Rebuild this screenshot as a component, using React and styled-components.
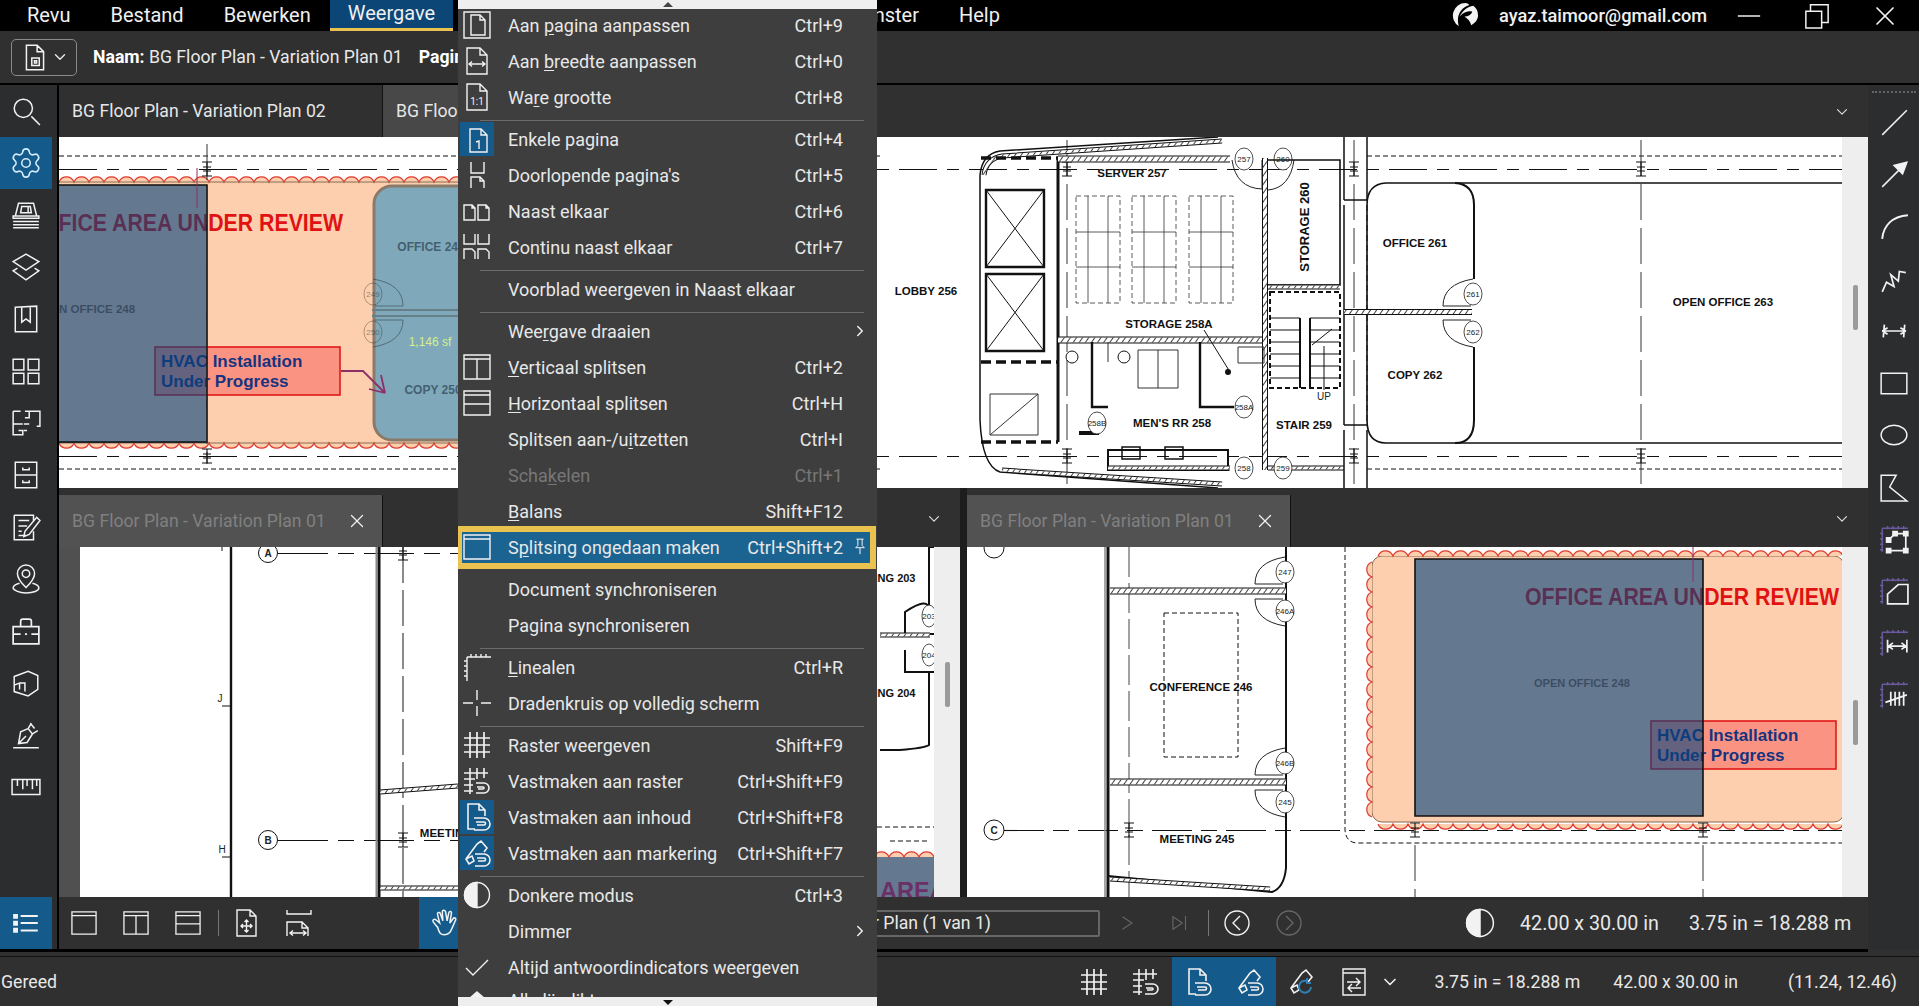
import React from 'react';
import styled, { createGlobalStyle } from 'styled-components';
import { Settings, ChevronDown, ChevronRight, X } from 'lucide-react';

const GlobalStyle = createGlobalStyle`
    html, body {
        margin: 0;
        padding: 0;
        background: #000;
        overflow: hidden;
    }
    * {
        box-sizing: border-box;
    }
`;

const purple = '#6b5a9e';

// every glyph sits in a 28 x 28 box
const glyphs = {
    search: <path d="M19 19l8 8M20 11.500a8.500 8.500 0 1 1-17 0 8.500 8.500 0 0 1 17 0z" />,
    tray: <path d="M7 3h14l3 12H4zM10 6h8l1 6H9zM16 6v6M2 15h24v2H2zM2 20h24M2 23h24M2 26h24" />,
    layers: <path d="M14 2l12 7-12 8-12-8zM6 15l-4 2.500 12 8.500 12-8.500-4-2.500" />,
    bookmark: <path d="M4 3l20-1v24H4zM10 3v14l4-3 4 3V3" />,
    thumbs: <path d="M2 3h10v10H2zM16 3h10v10H16zM2 16h10v10H2zM16 16h10v10H16z" />,
    plan: <path d="M13 3h14v14h-3M2 3h7M2 3v22h9v-4h-4M2 15h9M17 3v6h-4M17 15h-5M12 21h3" />,
    cabinet: <path d="M4 2h20v24H4zM4 14h20M11 7v2h6V7M11 19v2h6v-2" />,
    notes: <path d="M3 3h18v6M3 3v23h18v-8M7 8h10M7 13h8M7 18h3M7 22h7M27 8l-3-3-11 13-1 5 5-2z" />,
    pin: <path d="M14 22s-8-8-8-13a8 8 0 0 1 16 0c0 5-8 13-8 13zM17.500 9a3.500 3.500 0 1 1-7 0 3.500 3.500 0 0 1 7 0zM8 18c-4 1-6 3-6 4.500S7 27 14 27s12-2 12-4.500-2-3.500-6-4.500" />,
    toolbox: <path d="M2 10h24v16H2zM9 10V5a2 2 0 0 1 2-2h6a2 2 0 0 1 2 2v5M2 17h7M13 17h2M19 17h7" strokeWidth="1.600" />,
    solid: <path d="M3 8l13-5 9 4v13l-9 6-13-4zM3 16l5-2v6M8 14h5v8" />,
    sign: <path d="M2 26h24M7 22l2-11 7-3 4 5-5 8zM7 22l7-7M16 8l3-5M20 13l5-3M18 3l4 5" />,
    ruler: <path d="M1 7h26v14H1zM6 7v6M11 7v9M15 7v6M20 7v9M24 7v6" />,

    line: <path d="M3 26L26 3" />,
    arrow: <path d="M3 26L20 9M26 3l-12 3 8 8z" fill="currentColor" />,
    arc: <path d="M3 26C4 14 12 5 27 4" strokeWidth="1.800" />,
    zigzag: <path d="M3 26l4-9 7 4-3-11 7 6 1-9 6 1" strokeWidth="1.600" />,
    dimension: <path d="M3 14h22M5 8l-1 12M24 8l-1 12M3 14l5-3M3 14l5 3M25 14l-5-3M25 14l-5 3" strokeWidth="1.600" />,
    rect: <path d="M2 5h24v19H2z" />,
    ellipse: <path d="M26 14c0 5-5.500 9-12 9S2 19 2 14s5.500-9 12-9 12 4 12 9z" />,
    callout: <path d="M2 3h14l-6 11 16 13H2z" />,
    polyArea: (
        <>
            <path stroke={purple} d="M3 3h24M3 3v22M8 1v3M13 1v3M18 1v3M23 1v3M1 8h3M1 13h3M1 18h3M1 23h3" />
            <path d="M9 14l6-6h10v16H9" strokeWidth="1.600" />
            <path d="M7 12h4v4H7zM13 6h4v4h-4zM23 6h4v4h-4zM23 22h4v4h-4zM7 22h4v4H7z" fill="currentColor" />
        </>
    ),
    cutArea: (
        <>
            <path stroke={purple} d="M3 3h24M3 3v22M8 1v3M13 1v3M18 1v3M23 1v3M1 8h3M1 13h3M1 18h3M1 23h3" />
            <path d="M8 25V16l10-9h9v18z" strokeWidth="1.600" />
        </>
    ),
    lengthArea: (
        <>
            <path stroke={purple} d="M3 3h24M3 3v22M8 1v3M13 1v3M18 1v3M23 1v3M1 8h3M1 13h3M1 18h3M1 23h3" />
            <path d="M8 10v12M26 10v12M9 16h16M13 13l-4 3 4 3M21 13l4 3-4 3" strokeWidth="1.600" />
        </>
    ),
    countArea: (
        <>
            <path stroke={purple} d="M3 3h24M3 3v22M8 1v3M13 1v3M18 1v3M23 1v3M1 8h3M1 13h3M1 18h3M1 23h3" />
            <path d="M11 10v13M15 10v13M19 10v13M23 10v13M6 20l20-7" strokeWidth="1.600" />
        </>
    ),

    fitPage: <path d="M1 1h26v26H1zM8 4h9l5 5v15H8zM17 4v5h5" />,
    fitWidth: <path d="M4 1h13l7 7v19H4zM17 1v7h7M6 17h16M9 14.500L6 17l3 2.500M19 14.500l3 2.500-3 2.500" />,
    actual: (
        <>
            <path d="M4 1h13l7 7v19H4zM17 1v7h7" />
            <text x="14" y="22" textAnchor="middle" fontSize="10" fill="currentColor" stroke="none" fontFamily="Roboto, sans-serif">1:1</text>
        </>
    ),
    single: <path d="M7 4h11l6 6v17H7zM18 4v6h6M13 17l3-1v8" />,
    continuous: <path d="M8 1v11h13V1M8 27v-11h9l4 4v7M17 16v4h4" />,
    sideBySide: <path d="M1 8h8l3 3v12H1zM9 8v3h3M15 8h8l3 3v12H15zM23 8v3h3" />,
    contSide: <path d="M1 1v10h11V1M15 1v10h11V1M1 26v-10h8l3 3v7M15 26v-10h8l3 3v7" />,
    splitV: <path d="M1 2h26v24H1zM1 6h26M14 6v20" />,
    splitH: <path d="M1 2h26v24H1zM1 6h26M1 15h26" />,
    unsplit: <path d="M1 2h26v24H1zM1 6h26" />,
    moveFit: <path d="M4 1h13l6 6v20H4zM17 1v6h6M13.500 11v12M8 17h11M11.500 13l2-2 2 2M11.500 21l2 2 2-2M10 15l-2 2 2 2M17 15l2 2-2 2" />,
    widthFit: <path d="M2 1v4h24V1M2 27V13h15l6 6M17 13v6h6v8M5 24h16M8 21.500L5 24l3 2.500M18 21.500l3 2.500-3 2.500" />,
    rulers: <path d="M4 4h24M4 4v24M8 1v3M13 1v3M18 1v3M23 1v3M1 8h3M1 13h3M1 18h3M1 23h3" />,
    cross: <path d="M14 1v10M14 17v10M0 14h10M18 14h10" />,
    grid: <path d="M7 1v26M14 1v26M21 1v26M1 7h26M1 14h26M1 21h26" strokeWidth="1.700" />,
    snapGrid: <path d="M7 1v26M14 1v11M21 1v10M1 6h24M1 12h11M1 18h9M1 24h9M13 16h8a4.500 4.500 0 0 1 0 10h-8M14 20h6a1 1 0 0 1 0 2h-5" strokeWidth="1.600" />,
    snapPage: <path d="M12 26H5V1h11l6 6v6M16 1v6h6M11 15h10a5.500 5.500 0 0 1 0 12H11M13 19h8a1.500 1.500 0 0 1 0 3h-7" strokeWidth="1.600" />,
    snapMark: <path d="M3 20L14 5l4-3 6 7-3 4M3 20l3 5 5-3-2-5zM12 15h9a5.500 5.500 0 0 1 0 12h-9M14 19h7a1.500 1.500 0 0 1 0 3h-6" strokeWidth="1.600" />,
    syncMark: (
        <>
            <path d="M3 20L14 5l4-3 6 7-4 5M3 20l3 5 5-3-2-5z" strokeWidth="1.600" />
            <path d="M23 19a6 6 0 1 1-4-6M19 10v5h4" stroke="#2f7fb5" strokeWidth="2" />
        </>
    ),
    swap: <path d="M3 1h22v26H3zM3 5h22M7 14h13M16 10l4 4-4 4M21 20H8M12 16l-4 4 4 4" />,
    half: (
        <>
            <circle cx="14" cy="14" r="12.500" />
            <path d="M14 1.500a12.500 12.500 0 0 0 0 25z" fill="currentColor" />
        </>
    ),
    check: <path d="M3 15l7 7L25 7" />,
    tail: <path d="M14 6l7 6H7z" fill="currentColor" />,
    pinOff: <path d="M9 3h10M11 3v9l-3 3h12l-3-3V3M14 15v9" />,
    list: <path d="M3 6.500h2.500v2.500H3zM3 13h2.500v2.500H3zM3 19.500h2.500V22H3zM9 7.500h16M9 14h16M9 21h16" strokeWidth="2" fill="currentColor" />,
    hand: <path d="M7 18l-4-5c-1-2 1-3 2.500-2L9 14 7 6c-.500-2 2-2.500 2.500-1L12 12 11.500 3.500c0-2 2.500-2 3 0L16 12l1.500-7.500c.500-2 3-1.500 2.500.500l-1.500 9 3-4c1-1.500 3-.500 2.500 1l-3.500 8c-1 3-3 6-7 6s-5-2-6.500-7.500z" />,
    play: <path d="M7 6l12 8-12 8" />,
    last: <path d="M5 6l12 8-12 8zM21 5v18" />,
    circleLeft: <path d="M26 14a12 12 0 1 1-24 0 12 12 0 0 1 24 0zM17 7l-7 7 7 7" />,
    circleRight: <path d="M26 14a12 12 0 1 1-24 0 12 12 0 0 1 24 0zM11 7l7 7-7 7" />,
    docPage: <path d="M6 3h10l6 6v17H6zM16 3v6h6M11 15h7v7h-7zM13.500 17.500h2v2h-2z" />,
    restore: <path d="M2 9h17v18H2zM7 9V2h19v19h-7" strokeWidth="1.600" />,
    minimize: <path d="M2 14h24" strokeWidth="1.600" />,
};

const Svg = styled.svg`
    display: block;
    flex: none;
    width: ${(p) => p.$size || 28}px;
    height: ${(p) => p.$size || 28}px;
    color: ${(p) => p.$color || '#f2f2f2'};
    fill: none;
    stroke: currentColor;
    stroke-width: 1.4;
`;

const Glyph = ({ name, size, color }) => (
    <Svg viewBox="0 0 28 28" $size={size} $color={color}>
        {glyphs[name]}
    </Svg>
);

const railTop = ['search', 'gear', 'tray', 'layers', 'bookmark', 'thumbs', 'plan', 'cabinet', 'notes', 'pin', 'toolbox', 'solid', 'sign', 'ruler'];
const railRight = ['line', 'arrow', 'arc', 'zigzag', 'dimension', 'rect', 'ellipse', 'callout', 'polyArea', 'cutArea', 'lengthArea', 'countArea'];

const menuRows = [
    { icon: 'fitPage', label: 'Aan &pagina aanpassen', key: 'Ctrl+9' },
    { icon: 'fitWidth', label: 'Aan &breedte aanpassen', key: 'Ctrl+0' },
    { icon: 'actual', label: 'Wa&re grootte', key: 'Ctrl+8' },
    { sep: true },
    { icon: 'single', label: 'Enkele pagina', key: 'Ctrl+4', on: true },
    { icon: 'continuous', label: "Doorlopende pagina's", key: 'Ctrl+5' },
    { icon: 'sideBySide', label: 'Naast elkaar', key: 'Ctrl+6' },
    { icon: 'contSide', label: 'Continu naast elkaar', key: 'Ctrl+7' },
    { sep: true },
    { label: 'Voorblad weergeven in Naast elkaar' },
    { sep: true },
    { label: 'Wee&rgave draaien', more: true },
    { icon: 'splitV', label: '&Verticaal splitsen', key: 'Ctrl+2' },
    { icon: 'splitH', label: '&Horizontaal splitsen', key: 'Ctrl+H' },
    { label: 'Splitsen aan-/u&itzetten', key: 'Ctrl+I' },
    { label: 'Scha&kelen', key: 'Ctrl+1', off: true },
    { label: '&Balans', key: 'Shift+F12' },
    { icon: 'unsplit', label: 'S&plitsing ongedaan maken', key: 'Ctrl+Shift+2', hover: true },
    { sep: true, blank: true },
    { label: 'Document synchroniseren' },
    { label: 'Pagina synchroniseren' },
    { sep: true },
    { icon: 'rulers', label: '&Linealen', key: 'Ctrl+R' },
    { icon: 'cross', label: 'Dradenkruis op volledig scherm' },
    { sep: true },
    { icon: 'grid', label: 'Raster weergeven', key: 'Shift+F9' },
    { icon: 'snapGrid', label: 'Vastmaken aan raster', key: 'Ctrl+Shift+F9' },
    { icon: 'snapPage', label: 'Vastmaken aan inhoud', key: 'Ctrl+Shift+F8', on: true },
    { icon: 'snapMark', label: 'Vastmaken aan markering', key: 'Ctrl+Shift+F7', on: true },
    { sep: true },
    { icon: 'half', label: 'Donkere modus', key: 'Ctrl+3' },
    { label: 'Dimmer', more: true },
    { icon: 'check', label: 'Altijd antwoordindicators weergeven' },
    { icon: 'tail', label: 'Alle lijndikten weergeven', tail: true },
];

// "&" marks the access key of a menu label
const Access = ({ text }) => {
    const at = text.indexOf('&');
    if (at < 0) return text;
    return (
        <>
            {text.slice(0, at)}
            <u>{text[at + 1]}</u>
            {text.slice(at + 2)}
        </>
    );
};

const scallops = (x1, x2, y, up) => {
    let d = `M${x1} ${y}`;
    for (let x = x1; x < x2; x += 15) d += `a8 8 0 0 ${up ? 1 : 0} 15 0`;
    return d;
};

const scallopsDown = (y1, y2, x) => {
    let d = `M${x} ${y1}`;
    for (let y = y1; y < y2; y += 15) d += 'a8 8 0 0 0 0 15';
    return d;
};

const GridMark = ({ x, y }) => (
    <path d={`M${x - 5} ${y - 7}h10M${x - 5} ${y + 7}h10M${x} ${y - 7}v14M${x - 4} ${y - 2}h8M${x - 4} ${y + 2}h8`} stroke="#111" strokeWidth="1.100" />
);

const Door = ({ x, y, label, side = 1, flip = 1, dim }) => (
    <g opacity={dim ? 0.45 : 1}>
        <path
            d={`M${x} ${y - 15 * flip}Q${x - 30 * side} ${y - 10 * flip} ${x - 30 * side} ${y + 12 * flip}H${x - 2 * side}`}
            fill="none"
            stroke="#222"
            strokeWidth="1"
        />
        <ellipse cx={x} cy={y} rx="9" ry="11" fill={dim ? 'none' : '#fff'} stroke="#222" strokeWidth=".8" />
        <Tag x={x} y={y}>{label}</Tag>
    </g>
);

const Wall = ({ d, w = 7 }) => (
    <>
        <path d={d} fill="none" stroke="#111" strokeWidth={w} />
        <path d={d} fill="none" stroke="#fff" strokeWidth={w - 2} />
        <path d={d} fill="none" stroke="url(#hatch)" strokeWidth={w - 2} />
    </>
);

const Rack = ({ x }) => (
    <g fill="none" stroke="#333" strokeWidth=".8">
        <path d={`M${x} 196h44v107h-44z`} strokeDasharray="5 3" />
        <path d={`M${x + 12} 196v107M${x + 32} 196v107M${x} 232h44M${x} 267h44`} />
    </g>
);

const Review = ({ x, y }) => (
    <PlanTitle x={x} y={y} textAnchor="end" textLength="314" lengthAdjust="spacingAndGlyphs">OFFICE AREA UNDER REVIEW</PlanTitle>
);

const Hvac = ({ x, y }) => (
    <g>
        <rect x={x} y={y} width="185" height="48" fill="#fb9383" stroke="#e01818" strokeWidth="1.600" />
        <Callout x={x + 6} y={y + 14}>HVAC Installation</Callout>
        <Callout x={x + 6} y={y + 34}>Under Progress</Callout>
    </g>
);

const PlanTop = () => (
    <PlanSvg viewBox="59 137 1783 351" $w={1783} $h={351}>
        <defs>
            <pattern id="hatch" width="5" height="5" patternUnits="userSpaceOnUse" patternTransform="rotate(35)">
                <path d="M0 0V5" stroke="#111" strokeWidth="1.600" />
            </pattern>
        </defs>

        <rect x="50" y="182" width="600" height="261" fill="#fdcfae" />
        <path d={scallops(44, 650, 182, true)} fill="#fdcfae" stroke="#e0392e" strokeWidth="1.200" />
        <path d={scallops(44, 650, 443, false)} fill="#fdcfae" stroke="#e0392e" strokeWidth="1.200" />
        <path d="M59 182h600M59 443h600" stroke="#8a6a50" strokeWidth="1" />
        <rect x="374" y="186" width="200" height="254" rx="18" fill="#7fa9bb" stroke="#8a7a6a" strokeWidth="3" />
        <Label x={431} y={247} $c="#44606f" $s={12}>OFFICE 248</Label>
        <Label x={433} y={390} $c="#44606f" $s={12}>COPY 250</Label>
        <Label x={430} y={342} $c="#d8ef8a" $s={12} $w={400}>1,146 sf</Label>
        <Door x={373} y={294} label="249" side={-1} dim />
        <Door x={373} y={332} label="250" side={-1} flip={-1} dim />
        <path d="M372 310h90M372 316h90" stroke="#66808a" strokeWidth="2" />
        <Review x={343} y={231} />
        <Hvac x={155} y={347} />
        <path d="M341 371h22l22 22M385 393l-16-4M385 393l-4-18" fill="none" stroke="#8e2f68" strokeWidth="1.800" />
        <rect x="40" y="185" width="167" height="258" fill="#06437c" fillOpacity=".62" />
        <path d="M40 185h167v257H40" fill="none" stroke="#111" strokeWidth="1.600" />
        <Label x={85} y={309} $c="#3c4d63" $s={11.5}>OPEN OFFICE 248</Label>

        <path d="M59 156H880M1367 156H1842M1367 469H1842M59 469H880" stroke="#111" strokeWidth="1" strokeDasharray="5 3" />
        <path d="M59 169.500H1842M59 456.500H1842" stroke="#111" strokeWidth="1.100" strokeDasharray="38 10 12 10" />
        <path d="M207 144v320M1067 140v348M1354 140v348M1641 140v348" stroke="#333" strokeWidth="1" strokeDasharray="36 8" />
        <path d="M197 168v40" stroke="#8e2f68" strokeWidth="1" />
        <GridMark x={207} y={169} />
        <GridMark x={207} y={456} />
        <GridMark x={1067} y={169} />
        <GridMark x={1354} y={169} />
        <GridMark x={1641} y={169} />
        <GridMark x={1067} y={456} />
        <GridMark x={1354} y={456} />
        <GridMark x={1641} y={456} />

        {/* core and shafts */}
        <path d="M1218 137L1000 151Q982 154 980 175V420Q982 466 1000 472L1218 488" fill="none" stroke="#111" strokeWidth="1.500" />
        <Wall d="M1222 141L1002 156Q986 159 984 175" w={5} />
        <Wall d="M1002 470L1222 484" w={5} />
        <path d="M981 158H1058M981 442H1058M981 362H1058" fill="none" stroke="#111" strokeWidth="3.500" strokeDasharray="10 5" />
        <path d="M1058 158V442" stroke="#111" strokeWidth="3" />
        <path d="M986 190h58v77h-58zM986 190l58 77M1044 190l-58 77M986 274h58v77h-58zM986 274l58 77M1044 274l-58 77" fill="none" stroke="#111" strokeWidth="1" />
        <path d="M986 190h58v77h-58zM986 274h58v77h-58z" fill="none" stroke="#111" strokeWidth="2.400" />
        <path d="M990 394h48v41h-48zM990 435l48-41" fill="none" stroke="#333" strokeWidth="1" />

        {/* server room */}
        <Wall d="M1058 159H1230" />
        <Wall d="M1058 340H1264" />
        <Wall d="M1265 158V470" w={6} />
        <Rack x={1076} />
        <Rack x={1132} />
        <Rack x={1189} />
        <path d="M1232 160Q1236 188 1262 189V160M1268 190Q1290 188 1294 160" fill="none" stroke="#222" />
        <ellipse cx="1244" cy="159" rx="9" ry="11" fill="#fff" stroke="#222" strokeWidth=".8" />
        <Tag x={1244} y={159}>257</Tag>
        <ellipse cx="1283" cy="159" rx="9" ry="11" fill="#fff" stroke="#222" strokeWidth=".8" />
        <Tag x={1283} y={159}>260</Tag>

        {/* storage, stairs, toilets */}
        <path d="M1268 160H1340V285H1268" fill="none" stroke="#111" strokeWidth="1.600" />
        <Wall d="M1268 287H1340" w={5} />
        <path d="M1270 292h70v96h-70z" fill="none" stroke="#111" strokeWidth="2" strokeDasharray="5 3" />
        <path d="M1270 318h30M1270 330h30M1270 342h30M1270 354h30M1270 366h30M1270 378h30M1310 318h30M1310 330h30M1310 342h30M1310 354h30M1310 366h30M1310 378h30" stroke="#111" strokeWidth="1.200" />
        <path d="M1300 318v70M1310 318v70" stroke="#111" strokeWidth="2" />
        <path d="M1312 345l20-16M1324 390v-44" stroke="#111" fill="none" />
        <Tag x={1324} y={396} $s={10}>UP</Tag>
        <path d="M1092 342v65H1108M1200 342v65h14M1214 407h20" fill="none" stroke="#111" strokeWidth="2.400" />
        <path d="M1108 342v20M1138 350h40v38h-40zM1158 350v38M1238 347h26v16h-26z" fill="none" stroke="#333" strokeWidth="1" />
        <path d="M1080 432h18v2H1080zM1108 450h120V470H1108z" fill="none" stroke="#111" strokeWidth="2" />
        <path d="M1122 447h18v12h-18zM1165 447h18v12h-18z" fill="none" stroke="#111" strokeWidth="1.500" />
        <circle cx="1072" cy="357" r="6" fill="none" stroke="#111" />
        <circle cx="1124" cy="357" r="6" fill="none" stroke="#111" />
        <path d="M1204 330l26 42" stroke="#111" />
        <circle cx="1228" cy="372" r="3" fill="#111" />
        <Wall d="M1108 468H1230" w={5} />
        <Wall d="M1268 468H1344" w={5} />
        <ellipse cx="1244" cy="407" rx="9" ry="11" fill="#fff" stroke="#222" strokeWidth=".8" />
        <Tag x={1244} y={407}>258A</Tag>
        <ellipse cx="1097" cy="423" rx="9" ry="11" fill="#fff" stroke="#222" strokeWidth=".8" />
        <Tag x={1097} y={423}>258B</Tag>
        <ellipse cx="1244" cy="468" rx="9" ry="11" fill="#fff" stroke="#222" strokeWidth=".8" />
        <Tag x={1244} y={468}>258</Tag>
        <ellipse cx="1283" cy="468" rx="9" ry="11" fill="#fff" stroke="#222" strokeWidth=".8" />
        <Tag x={1283} y={468}>259</Tag>

        {/* corridor and offices */}
        <path d="M1344 200V137M1367 200V137M1344 430V488M1367 430V488M1344 200H1367M1344 205V425M1344 425H1367" fill="none" stroke="#111" strokeWidth="1.500" />
        <path d="M1367 205V425" stroke="#111" strokeDasharray="6 4" />
        <path d="M1842 183H1386Q1367 184 1367 205V420Q1367 443 1386 443H1842" fill="none" stroke="#111" strokeWidth="1.600" />
        <path d="M1455 183Q1474 184 1474 205V279M1474 347V420Q1474 443 1455 443" fill="none" stroke="#111" strokeWidth="2" />
        <Wall d="M1344 312H1472" w={6} />
        <Door x={1473} y={294} label="261" />
        <Door x={1473} y={332} label="262" flip={-1} />

        <Label x={1132} y={173}>SERVER 257</Label>
        <Label x={926} y={291}>LOBBY 256</Label>
        <Label x={1169} y={324}>STORAGE 258A</Label>
        <Label x={1172} y={423}>MEN&apos;S RR 258</Label>
        <Label x={1304} y={425}>STAIR 259</Label>
        <Label x={1415} y={243}>OFFICE 261</Label>
        <Label x={1415} y={375}>COPY 262</Label>
        <Label x={1723} y={302}>OPEN OFFICE 263</Label>
        <Label x={1304} y={227} $s={13} transform="rotate(-90 1304 227)">STORAGE 260</Label>
    </PlanSvg>
);

const PlanLowerLeft = () => (
    <PlanSvg viewBox="80 547 854 350" $w={854} $h={350}>
        <path d="M231 547V897" stroke="#111" strokeWidth="2.400" />
        <path d="M222 547v4M222 706h8M222 857h8" stroke="#111" />
        <Tag x={220} y={698} $s={10}>J</Tag>
        <Tag x={222} y={849} $s={10}>H</Tag>
        <circle cx="268" cy="553" r="9.500" fill="#fff" stroke="#111" />
        <circle cx="268" cy="840" r="9.500" fill="#fff" stroke="#111" />
        <Tag x={268} y={553} $s={10} $w={700}>A</Tag>
        <Tag x={268} y={840} $s={10} $w={700}>B</Tag>
        <path d="M278 553.500H458M278 840.500H458" stroke="#111" strokeDasharray="50 10 16 10" />
        <path d="M379 547V897" stroke="#111" strokeWidth="3" />
        <path d="M376.500 547V897" stroke="#888" strokeWidth="2" />
        <path d="M403 547V897" stroke="#666" strokeWidth="1.500" strokeDasharray="36 7" />
        <GridMark x={403} y={553} />
        <GridMark x={403} y={840} />
        <Wall d="M380 792L458 786" w={5} />
        <Wall d="M380 888H458" w={5} />
        <Label x={446} y={833}>MEETING</Label>

        <path d="M934 547H929V610Q929 596 905 612V634M905 634H934M905 650V672H934M929 672V745Q925 748 900 750H880" fill="none" stroke="#111" strokeWidth="2" />
        <Wall d="M880 635H930" w={5} />
        <ellipse cx="929" cy="616" rx="7" ry="11" fill="#fff" stroke="#222" strokeWidth=".8" />
        <Tag x={929} y={616}>203</Tag>
        <ellipse cx="929" cy="655" rx="7" ry="11" fill="#fff" stroke="#222" strokeWidth=".8" />
        <Tag x={929} y={655}>204</Tag>
        <Label x={895} y={578} $s={11}>ING 203</Label>
        <Label x={895} y={693} $s={11}>ING 204</Label>
        <path d="M877 827H934M890 841H930" stroke="#111" strokeDasharray="5 3" />
        <rect x="877" y="857" width="57" height="40" fill="#64788f" />
        <path d={scallops(874, 940, 857, true)} fill="#fdcfae" stroke="#e0392e" strokeWidth="1.200" />
        <PlanTitle x={880} y={899} $fill="#6c2f68">AREA</PlanTitle>
    </PlanSvg>
);

const PlanLowerRight = () => (
    <PlanSvg viewBox="967 547 875 350" $w={875} $h={350}>
        <circle cx="994" cy="548" r="10" fill="none" stroke="#111" />
        <circle cx="994" cy="830" r="10" fill="#fff" stroke="#111" />
        <Tag x={994} y={830} $s={10} $w={700}>C</Tag>
        <path d="M1004 830.500H1842" stroke="#111" strokeWidth="1.100" strokeDasharray="40 9 16 9" />
        <path d="M1108 547V897" stroke="#111" strokeWidth="3" />
        <path d="M1105 547V897" stroke="#888" strokeWidth="1.500" />
        <path d="M1129 547V897" stroke="#444" strokeWidth="1" strokeDasharray="30 6" />
        <path d="M1286 547V868Q1284 888 1272 892L1108 876" fill="none" stroke="#111" strokeWidth="2" />
        <Wall d="M1110 591H1286" />
        <Wall d="M1110 782H1286" />
        <Wall d="M1110 879L1270 889" w={5} />
        <path d="M1164 613h74v144h-74z" fill="none" stroke="#111" strokeDasharray="5 3" />
        <Door x={1285} y={572} label="247" />
        <Door x={1285} y={611} label="246A" flip={-1} />
        <Door x={1285} y={763} label="246B" />
        <Door x={1285} y={802} label="245" flip={-1} />
        <Label x={1201} y={687}>CONFERENCE 246</Label>
        <Label x={1197} y={839}>MEETING 245</Label>
        <GridMark x={1129} y={830} />

        <path d="M1345 547V830Q1346 843 1358 843H1842" fill="none" stroke="#111" strokeDasharray="5 3" />
        <path d="M1415 845V897M1703 845V897" stroke="#333" strokeDasharray="36 8" />
        <rect x="1372" y="556" width="472" height="266" rx="10" fill="#fdcfae" stroke="#8a6a50" />
        <path d={scallops(1378, 1842, 556, true)} fill="#fdcfae" stroke="#e0392e" strokeWidth="1.200" />
        <path d={scallops(1378, 1842, 824, false)} fill="#fdcfae" stroke="#e0392e" strokeWidth="1.200" />
        <path d={scallopsDown(562, 816, 1372)} fill="#fdcfae" stroke="#e0392e" strokeWidth="1.200" />
        <Review x={1839} y={605} />
        <Hvac x={1651} y={721} />
        <rect x="1415" y="559" width="288" height="257" fill="#06437c" fillOpacity=".62" />
        <path d="M1415 559h288v257h-288z" fill="none" stroke="#111" strokeWidth="1.600" />
        <Label x={1582} y={683} $c="#3c4d63" $s={11}>OPEN OFFICE 248</Label>
        <path d="M1693 547v35" stroke="#8e2f68" />
        <GridMark x={1415} y={830} />
        <GridMark x={1703} y={830} />
    </PlanSvg>
);

export default function App() {
    return (
        <Page>
            <GlobalStyle />
            <MenuBar>
                <MenuItem>Revu</MenuItem>
                <MenuItem>Bestand</MenuItem>
                <MenuItem>Bewerken</MenuItem>
                <MenuItem $open>Weergave</MenuItem>
                <MenuItem $tuck>Document</MenuItem>
                <MenuItem>Batch</MenuItem>
                <MenuItem>Hulpmiddelen</MenuItem>
                <MenuItem>Venster</MenuItem>
                <MenuItem>Help</MenuItem>
                <Account>
                    <Logo viewBox="0 0 28 28">
                        <path d="M14 1a13 13 0 0 0-7 24C4 14 9 6 18 3c-1-1-2.500-2-4-2z" fill="#f4f4f4" />
                        <path d="M8 15c4-5 10-6 13-5-1 3-4 5-8 5 3 2 6 5 7 9 4-2 7-6 7-10 0-5-2-8-5-10-6 1-11 5-14 11z" fill="#f4f4f4" />
                    </Logo>
                    <Email>ayaz.taimoor@gmail.com</Email>
                    <WindowButton><Glyph name="minimize" size={26} /></WindowButton>
                    <WindowButton><Glyph name="restore" size={26} /></WindowButton>
                    <WindowButton><X size={32} strokeWidth={1.3} color="#f2f2f2" /></WindowButton>
                </Account>
            </MenuBar>

            <Toolbar>
                <DocSelect>
                    <Glyph name="docPage" size={30} />
                    <ChevronDown size={18} color="#ececec" strokeWidth={1.8} />
                </DocSelect>
                <Field><strong>Naam:</strong> BG Floor Plan - Variation Plan 01</Field>
                <Field><strong>Pagina:</strong> BG Floor Plan</Field>
            </Toolbar>

            <Workspace>
                <LeftRail>
                    <RailGroup>
                        {railTop.map((name) => (
                            <RailButton key={name} $active={name === 'gear'}>
                                {name === 'gear' ? (
                                    <Settings size={34} strokeWidth={1.1} color="#d4ecfb" />
                                ) : (
                                    <Glyph name={name} size={30} />
                                )}
                            </RailButton>
                        ))}
                    </RailGroup>
                    <RailButton $active><Glyph name="list" size={30} /></RailButton>
                </LeftRail>

                <Center>
                    <TopPane>
                        <TabBar>
                            <Tab>BG Floor Plan - Variation Plan 02</Tab>
                            <Tab $back>BG Floor Plan - Variation Plan 01</Tab>
                            <PaneChevron />
                        </TabBar>
                        <Sheet>
                            <PlanTop />
                            <ScrollTrack><ScrollThumb $top={148} /></ScrollTrack>
                        </Sheet>
                    </TopPane>

                    <LowerRow>
                        <Pane>
                            <TabBar $lower>
                                <Tab $dim>
                                    BG Floor Plan - Variation Plan 01
                                    <TabClose><X size={22} strokeWidth={1.4} color="#f0f0f0" /></TabClose>
                                </Tab>
                                <PaneChevron />
                            </TabBar>
                            <Sheet $margin>
                                <PlanLowerLeft />
                                <ScrollTrack><ScrollThumb $top={115} /></ScrollTrack>
                            </Sheet>
                        </Pane>
                        <Gutter />
                        <Pane>
                            <TabBar $lower>
                                <Tab $dim>
                                    BG Floor Plan - Variation Plan 01
                                    <TabClose><X size={22} strokeWidth={1.4} color="#f0f0f0" /></TabClose>
                                </Tab>
                                <PaneChevron />
                            </TabBar>
                            <Sheet>
                                <PlanLowerRight />
                                <ScrollTrack><ScrollThumb $top={153} /></ScrollTrack>
                            </Sheet>
                        </Pane>
                    </LowerRow>

                    <BottomBar>
                        <BarButton><Glyph name="unsplit" size={26} /></BarButton>
                        <BarButton><Glyph name="splitV" size={26} /></BarButton>
                        <BarButton><Glyph name="splitH" size={26} /></BarButton>
                        <BarDivider />
                        <BarButton><Glyph name="moveFit" /></BarButton>
                        <BarButton><Glyph name="widthFit" /></BarButton>
                        <BarButton $active $gap={94}><Glyph name="hand" size={30} /></BarButton>
                        <PageField>BG Floor Plan (1 van 1)</PageField>
                        <BarButton $gap={2}><Glyph name="play" size={22} color="#666" /></BarButton>
                        <BarButton><Glyph name="last" size={22} color="#666" /></BarButton>
                        <BarDivider $gap={2} />
                        <BarButton><Glyph name="circleLeft" /></BarButton>
                        <BarButton><Glyph name="circleRight" color="#666" /></BarButton>
                        <BarGlyphGap><Glyph name="half" size={30} /></BarGlyphGap>
                        <BarText>42.00 x 30.00 in</BarText>
                        <BarText>3.75 in = 18.288 m</BarText>
                    </BottomBar>
                </Center>

                <RightRail>
                    <Grip />
                    {railRight.map((name) => (
                        <RightButton key={name}><Glyph name={name} size={30} /></RightButton>
                    ))}
                </RightRail>
            </Workspace>

            <StatusBar>
                <StatusText>Gereed</StatusText>
                <StatusTools>
                    <StatusButton><Glyph name="grid" /></StatusButton>
                    <StatusButton><Glyph name="snapGrid" /></StatusButton>
                    <StatusButton $active><Glyph name="snapPage" /></StatusButton>
                    <StatusButton $active><Glyph name="snapMark" /></StatusButton>
                    <StatusButton><Glyph name="syncMark" /></StatusButton>
                    <StatusButton><Glyph name="swap" /></StatusButton>
                    <ChevronDown size={20} color="#ececec" strokeWidth={2} />
                </StatusTools>
                <StatusText $left={35}>3.75 in = 18.288 m</StatusText>
                <StatusText $left={33}>42.00 x 30.00 in</StatusText>
                <StatusText $left={50}>(11.24, 12.46)</StatusText>
            </StatusBar>

            <Menu>
                <MenuEdge><EdgeArrow $up /></MenuEdge>
                <MenuList>
                    {menuRows.map((row, i) =>
                        row.sep ? (
                            <Separator key={i} $blank={row.blank} />
                        ) : (
                            <Row key={i} $hover={row.hover} $off={row.off} $tail={row.tail}>
                                <RowIcon $on={row.on}>
                                    {row.icon && <Glyph name={row.icon} color={row.off ? '#777' : '#f2f2f2'} />}
                                </RowIcon>
                                <RowLabel><Access text={row.label} /></RowLabel>
                                {row.key && <Shortcut>{row.key}</Shortcut>}
                                {row.more && <More><ChevronRight size={18} strokeWidth={2} color="#f0f0f0" /></More>}
                                {row.hover && <PinSlot><Glyph name="pinOff" size={20} /></PinSlot>}
                            </Row>
                        )
                    )}
                </MenuList>
                <MenuEdge><EdgeArrow /></MenuEdge>
            </Menu>
        </Page>
    );
}

const Page = styled.div`
    position: relative;
    width: 1919px;
    height: 1006px;
    overflow: hidden;
    display: flex;
    flex-direction: column;
    background: #000;
    color: #ededed;
    font-family: Roboto, 'Noto Sans', sans-serif;
`;

const MenuBar = styled.header`
    display: flex;
    align-items: stretch;
    flex: none;
    height: 31px;
    padding-left: 7px;
    background: #000;
`;

const MenuItem = styled.div`
    display: flex;
    align-items: center;
    padding: 0 ${(p) => (p.$open ? 18 : 20)}px 2px;
    margin-left: ${(p) => (p.$open ? '-1px' : p.$tuck ? '-9px' : 0)};
    font-size: 20px;
    color: #f0f0f0;
    background: ${(p) => (p.$open ? '#0b4677' : 'transparent')};
    border-bottom: ${(p) => (p.$open ? '3px solid #eac24f' : '0')};
`;

const Account = styled.div`
    display: flex;
    align-items: center;
    margin-left: auto;
`;

const Logo = styled.svg`
    width: 27px;
    height: 27px;
    margin-right: 20px;
`;

const Email = styled.span`
    width: 216px;
    font-size: 18.2px;
    font-weight: 500;
    color: #f0f0f0;
`;

const WindowButton = styled.span`
    display: flex;
    justify-content: center;
    width: 68px;
`;

const Toolbar = styled.div`
    display: flex;
    align-items: center;
    flex: none;
    height: 54px;
    padding-left: 11px;
    background: #303030;
    border-bottom: 2px solid #000;
`;

const DocSelect = styled.div`
    display: flex;
    align-items: center;
    justify-content: space-between;
    width: 66px;
    height: 37px;
    padding: 0 7px 0 8px;
    border: 1px solid #8a8a8a;
    border-radius: 5px;
`;

const Field = styled.div`
    margin-left: 16px;
    white-space: nowrap;
    font-size: 17.65px;
    color: #e8e8e8;
    strong {
        font-weight: 700;
        color: #fff;
    }
`;

const Workspace = styled.div`
    display: flex;
    flex: none;
    height: 864px;
`;

const LeftRail = styled.nav`
    display: flex;
    flex-direction: column;
    justify-content: space-between;
    flex: none;
    width: 59px;
    background: #2b2d2f;
    border-right: 2px solid #000;
`;

const RailGroup = styled.div`
    display: flex;
    flex-direction: column;
`;

const RailButton = styled.div`
    display: flex;
    align-items: center;
    justify-content: center;
    width: 52px;
    height: 52px;
    background: ${(p) => (p.$active ? '#145a8a' : 'transparent')};
`;

const Center = styled.main`
    display: flex;
    flex-direction: column;
    width: 1809px;
    flex: none;
`;

const TopPane = styled.section`
    display: flex;
    flex-direction: column;
    flex: none;
    height: 403px;
`;

const LowerRow = styled.div`
    display: flex;
    flex: none;
    height: 409px;
`;

const Pane = styled.section`
    display: flex;
    flex-direction: column;
    width: 901px;
`;

const Gutter = styled.div`
    flex: none;
    width: 7px;
    background: #1d1d1d;
`;

const TabBar = styled.div`
    position: relative;
    display: flex;
    align-items: stretch;
    flex: none;
    height: ${(p) => (p.$lower ? 59 : 52)}px;
    padding-top: ${(p) => (p.$lower ? 7 : 0)}px;
    background: #303030;
`;

const Tab = styled.div`
    display: flex;
    align-items: center;
    flex: none;
    width: 324px;
    padding: 0 0 1px 13px;
    font-size: 17.65px;
    white-space: nowrap;
    overflow: hidden;
    color: ${(p) => (p.$dim ? '#808080' : '#e6e6e6')};
    background: ${(p) => (p.$dim ? '#525252' : p.$back ? '#484848' : '#303030')};
    border-right: 1px solid #111;
`;

const TabClose = styled.span`
    display: flex;
    margin-left: 20px;
`;

const ChevronSlot = styled.span`
    position: absolute;
    right: 26px;
    top: 50%;
    transform: translate(50%, -45%);
    display: flex;
`;

const PaneChevron = () => (
    <ChevronSlot>
        <ChevronDown size={18} color="#dcdcdc" strokeWidth={1.6} />
    </ChevronSlot>
);

const Sheet = styled.div`
    display: flex;
    flex: none;
    height: ${(p) => (p.$margin ? 350 : 351)}px;
    padding-left: ${(p) => (p.$margin ? 21 : 0)}px;
    background: #505050;
    overflow: hidden;
`;

const PlanSvg = styled.svg`
    display: block;
    flex: none;
    width: ${(p) => p.$w}px;
    height: ${(p) => p.$h}px;
    background: #fff;
`;

const Label = styled.text`
    font-family: 'Liberation Sans', Arial, sans-serif;
    font-size: ${(p) => p.$s || 11.5}px;
    font-weight: ${(p) => p.$w || 700};
    fill: ${(p) => p.$c || '#111'};
    text-anchor: middle;
    dominant-baseline: central;
`;

const Tag = styled.text`
    font-family: 'Liberation Sans', Arial, sans-serif;
    font-size: ${(p) => p.$s || 8}px;
    font-weight: ${(p) => p.$w || 400};
    fill: #222;
    text-anchor: middle;
    dominant-baseline: central;
`;

const PlanTitle = styled.text`
    font-family: 'Liberation Sans', Arial, sans-serif;
    font-size: 23.5px;
    font-weight: 700;
    fill: ${(p) => p.$fill || '#e01212'};
`;

const Callout = styled.text`
    font-family: 'Liberation Sans', Arial, sans-serif;
    font-size: 17px;
    font-weight: 700;
    fill: #16337f;
    dominant-baseline: central;
`;

const ScrollTrack = styled.div`
    display: flex;
    justify-content: center;
    flex: none;
    width: 26px;
    background: #eeeeee;
`;

const ScrollThumb = styled.div`
    width: 5px;
    height: 45px;
    margin-top: ${(p) => p.$top}px;
    border-radius: 2px;
    background: #9a9a9a;
`;

const BottomBar = styled.div`
    display: flex;
    align-items: center;
    flex: none;
    height: 52px;
    background: #303030;
    font-size: 19.7px;
    color: #e8e8e8;
`;

const BarButton = styled.div`
    display: flex;
    align-items: center;
    justify-content: center;
    flex: none;
    width: 52px;
    height: 52px;
    margin-left: ${(p) => p.$gap || 0}px;
    background: ${(p) => (p.$active ? '#145a8a' : 'transparent')};
    &:first-child {
        margin-left: -1px;
    }
`;

const BarDivider = styled.span`
    flex: none;
    width: 1px;
    height: 26px;
    margin: 0 2px 0 ${(p) => p.$gap || 4}px;
    background: #777;
`;

const PageField = styled.div`
    display: flex;
    align-items: center;
    justify-content: flex-end;
    flex: none;
    width: 629px;
    height: 27px;
    padding-right: 107px;
    border: 2px solid #666;
    border-radius: 2px;
    white-space: nowrap;
    overflow: hidden;
    font-size: 17.65px;
`;

const BarGlyphGap = styled.span`
    display: flex;
    margin: 0 25px 0 150px;
`;

const BarText = styled.span`
    white-space: nowrap;
    margin-right: 30px;
`;

const RightRail = styled.aside`
    display: flex;
    flex-direction: column;
    align-items: center;
    flex: none;
    width: 51px;
    background: #2b2d2f;
`;

const Grip = styled.div`
    width: 44px;
    height: 5px;
    margin-top: 6px;
    border-top: 2px dotted #666;
`;

const RightButton = styled.div`
    display: flex;
    align-items: center;
    justify-content: center;
    width: 51px;
    height: 52.200px;
`;

const StatusBar = styled.footer`
    display: flex;
    align-items: center;
    flex: none;
    height: 57px;
    padding: 8px 22px 0 1px;
    background:
        linear-gradient(#000, #000) 0 0 / 1868px 3px no-repeat,
        linear-gradient(#303030 7px, #111 7px, #111 8px, #303030 8px);
`;

const StatusText = styled.span`
    margin-left: ${(p) => p.$left || 0}px;
    font-size: 17.7px;
    color: #e8e8e8;
    white-space: nowrap;
`;

const StatusTools = styled.div`
    display: flex;
    align-items: center;
    margin-left: auto;
`;

const StatusButton = styled.div`
    display: flex;
    align-items: center;
    justify-content: center;
    width: 52px;
    height: 49px;
    background: ${(p) => (p.$active ? '#145a8a' : 'transparent')};
`;

const Menu = styled.div`
    position: absolute;
    left: 458px;
    top: 0;
    display: flex;
    flex-direction: column;
    width: 419px;
    height: 1006px;
    background: #3e3e3e;
`;

const MenuEdge = styled.div`
    position: relative;
    z-index: 1;
    display: flex;
    justify-content: center;
    flex: none;
    height: 9px;
    background: #eeeeee;
`;

const EdgeArrow = styled.span`
    width: 0;
    height: 0;
    margin-top: ${(p) => (p.$up ? 2 : 3)}px;
    border-left: 5px solid transparent;
    border-right: 5px solid transparent;
    border-bottom: ${(p) => (p.$up ? '5px solid #444' : '0')};
    border-top: ${(p) => (p.$up ? '0' : '5px solid #111')};
`;

const MenuList = styled.div`
    flex: 1;
    min-height: 0;
    margin-top: -2px;
    overflow: hidden;
    font-size: 18px;
`;

const Row = styled.div`
    display: flex;
    align-items: center;
    height: ${(p) => (p.$hover ? 43 : 36)}px;
    margin: ${(p) => (p.$hover ? '-3.5px 1px -3.5px -2px' : p.$tail ? '-3px 0 0' : '0')};
    padding: 0 ${(p) => (p.$hover ? 0 : 34)}px 0 ${(p) => (p.$hover ? 0 : 2)}px;
    color: ${(p) => (p.$off ? '#777' : '#e8e8e8')};
    white-space: nowrap;
    ${(p) =>
        p.$hover &&
        `
        position: relative;
        z-index: 1;
        background: #1b6391;
        border: 6px solid #eac24f;
        & > span:first-child {
            margin-left: -2px;
        }
    `}
`;

const RowIcon = styled.span`
    display: flex;
    align-items: center;
    justify-content: center;
    flex: none;
    width: 34px;
    height: 34px;
    background: ${(p) => (p.$on ? '#145a8a' : 'transparent')};
`;

const RowLabel = styled.span`
    flex: 1;
    margin-left: 14px;
    u {
        text-underline-offset: 2px;
    }
`;

const Shortcut = styled.span`
    flex: none;
`;

const More = styled.span`
    display: flex;
    margin-right: -26px;
`;

const PinSlot = styled.span`
    display: flex;
    margin-left: 7px;
`;

const Separator = styled.div`
    height: 6px;
    padding: 5px 13px 0 22px;
    &::after {
        content: '';
        display: block;
        height: 1px;
        background: ${(p) => (p.$blank ? 'transparent' : '#6b6b6b')};
    }
`;
